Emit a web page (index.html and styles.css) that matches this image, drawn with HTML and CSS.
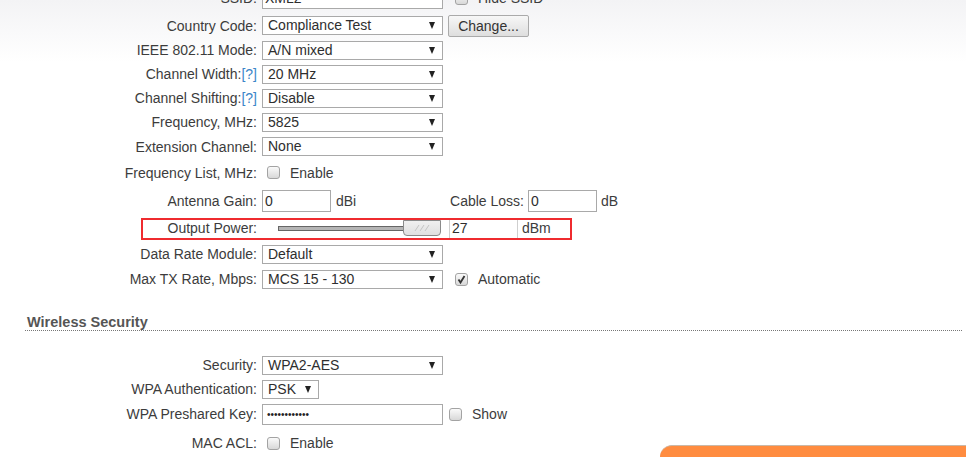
FILE: index.html
```html
<!DOCTYPE html>
<html lang="en">
<head>
    <meta charset="UTF-8">
    <meta name="viewport" content="width=device-width, initial-scale=1.0">
    <link rel="stylesheet" href="styles.css">
    <title>Wireless</title>
</head>
<body>
    <div class="page">
        <div class="form">
            <div class="row h30">
                <div class="lbl">SSID:</div>
                <div class="text wide">XML2</div>
                <span class="chk gap-l"></span><span class="chk-text">Hide SSID</span>
            </div>
            <div class="row h25">
                <div class="lbl">Country Code:</div>
                <div class="sel">Compliance Test</div>
                <div class="btn">Change...</div>
            </div>
            <div class="row">
                <div class="lbl">IEEE 802.11 Mode:</div>
                <div class="sel">A/N mixed</div>
            </div>
            <div class="row">
                <div class="lbl">Channel Width:<span class="help">[?]</span></div>
                <div class="sel">20 MHz</div>
            </div>
            <div class="row">
                <div class="lbl">Channel Shifting:<span class="help">[?]</span></div>
                <div class="sel">Disable</div>
            </div>
            <div class="row">
                <div class="lbl">Frequency, MHz:</div>
                <div class="sel">5825</div>
            </div>
            <div class="row h25">
                <div class="lbl">Extension Channel:</div>
                <div class="sel">None</div>
            </div>
            <div class="row h27">
                <div class="lbl">Frequency List, MHz:</div>
                <span class="chk"></span><span class="chk-text">Enable</span>
            </div>
            <div class="row h29">
                <div class="lbl">Antenna Gain:</div>
                <div class="text num">0</div>
                <span class="unit">dBi</span>
                <div class="lbl2">Cable Loss:</div>
                <div class="text num">0</div>
                <span class="unit-end">dB</span>
            </div>
            <div class="row h26 marked">
                <div class="lbl">Output Power:</div>
                <div class="slider">
                    <div class="track"></div>
                    <div class="handle">
                        <svg width="16" height="8" viewBox="0 0 16 8">
                            <path d="M1 7 L5 1 M6 7 L10 1 M11 7 L15 1" stroke="#c4c4c4" stroke-width="1" fill="none"/>
                        </svg>
                    </div>
                </div>
                <div class="power">27</div>
                <span class="unit-end">dBm</span>
                <div class="mark"></div>
            </div>
            <div class="row h26">
                <div class="lbl">Data Rate Module:</div>
                <div class="sel">Default</div>
            </div>
            <div class="row">
                <div class="lbl">Max TX Rate, Mbps:</div>
                <div class="sel">MCS 15 - 130</div>
                <span class="chk checked gap-l">
                    <svg width="11" height="11" viewBox="0 0 11 11">
                        <path d="M2.5 5.5 L4.5 8.5 L8.5 2" stroke="#333" stroke-width="1.8" fill="none"/>
                    </svg>
                </span>
                <span class="chk-text">Automatic</span>
            </div>
        </div>

        <div class="section-title">Wireless Security</div>

        <div class="form security">
            <div class="row">
                <div class="lbl">Security:</div>
                <div class="sel">WPA2-AES</div>
            </div>
            <div class="row">
                <div class="lbl">WPA Authentication:</div>
                <div class="sel small">PSK</div>
            </div>
            <div class="row h26">
                <div class="lbl">WPA Preshared Key:</div>
                <div class="text wide pass">&bull;&bull;&bull;&bull;&bull;&bull;&bull;&bull;&bull;&bull;&bull;&bull;</div>
                <span class="chk gap-s"></span><span class="chk-text">Show</span>
            </div>
            <div class="row h32">
                <div class="lbl">MAC ACL:</div>
                <span class="chk"></span><span class="chk-text">Enable</span>
            </div>
        </div>
    </div>
    <div class="footer-bar"></div>
</body>
</html>
```

FILE: styles.css
```css
html, body {
    margin: 0;
    height: 100%;
    overflow: hidden;
}
body {
    font-family: "Liberation Sans", Arial, sans-serif;
    font-size: 14px;
    color: #3c3c3c;
    background: linear-gradient(#f3f3f5 0px, #ffffff 62px) no-repeat;
    background-color: #fff;
}
.page {
    margin-top: -17px;
}
/* rows of the settings form */
.row {
    display: flex;
    align-items: center;
    height: 24px;
}
.h25 { height: 25px; }
.h26 { height: 26px; }
.h27 { height: 27px; }
.h29 { height: 29px; }
.h30 { height: 30px; }
.h32 { height: 32px; }
.lbl {
    flex: none;
    width: 257px;
    margin-right: 5px;
    text-align: right;
    white-space: nowrap;
}
.help {
    color: #3b85c8;
}
/* select boxes */
.sel {
    position: relative;
    box-sizing: border-box;
    width: 181px;
    height: 19px;
    line-height: 17px;
    padding-left: 5px;
    border: 1px solid #a9a9a9;
    background: #fff;
    color: #2e2e2e;
}
.sel::after {
    content: "";
    position: absolute;
    right: 7px;
    top: 5px;
    border-left: 3.5px solid transparent;
    border-right: 3.5px solid transparent;
    border-top: 7px solid #222;
}
.sel.small {
    width: 57px;
}
.btn {
    box-sizing: border-box;
    width: 81px;
    height: 22px;
    line-height: 20px;
    margin-left: 5px;
    text-align: center;
    border: 1px solid #aaa;
    border-radius: 2px;
    background: linear-gradient(#f7f7f7, #dedede);
    color: #333;
}
/* text inputs */
.text {
    box-sizing: border-box;
    height: 22px;
    line-height: 20px;
    padding-left: 2px;
    border: 1px solid #a9a9a9;
    background: #fff;
    color: #2e2e2e;
}
.wide {
    width: 181px;
}
.num {
    width: 69px;
}
.pass {
    font-size: 10px;
    padding-left: 4px;
    color: #222;
    height: 21px;
}
.unit {
    width: 114px;
    margin-left: 5px;
}
.unit-end {
    margin-left: 4px;
}
.lbl2 {
    width: 74px;
    margin-right: 4px;
    text-align: right;
    white-space: nowrap;
}
/* checkboxes */
.chk {
    box-sizing: border-box;
    display: inline-block;
    width: 13px;
    height: 13px;
    margin-left: 5px;
    border: 1px solid #a3a3a3;
    border-radius: 3px;
    background: linear-gradient(#fafafa, #d8d8d8);
}
.chk svg {
    display: block;
}
.gap-l {
    margin-left: 12px;
}
.gap-s {
    margin-left: 6px;
}
.chk-text {
    margin-left: 10px;
}
/* output power slider */
.marked {
    position: relative;
}
.slider {
    position: relative;
    width: 180px;
    height: 16px;
}
.track {
    position: absolute;
    left: 16px;
    top: 6px;
    box-sizing: border-box;
    width: 128px;
    height: 5px;
    border: 1px solid #666;
    background: #b4b4b4;
}
.handle {
    position: absolute;
    left: 141px;
    top: 0;
    box-sizing: border-box;
    width: 38px;
    height: 16px;
    border: 1px solid #8a8a8a;
    border-radius: 0 0 4px 4px;
    background: linear-gradient(#f0f0f0, #e0e0e0);
    display: flex;
    align-items: center;
    justify-content: center;
}
.power {
    box-sizing: border-box;
    width: 69px;
    height: 21px;
    line-height: 21px;
    margin-left: 7px;
    padding-left: 2px;
    border-left: 1px solid #cfcfcf;
    border-right: 1px solid #cfcfcf;
    color: #2e2e2e;
}
.mark {
    position: absolute;
    left: 141px;
    top: 3px;
    box-sizing: border-box;
    width: 431px;
    height: 22px;
    border: 2px solid #ef2b2f;
}
/* section heading */
.section-title {
    margin: 23px 0 0 25px;
    width: 935px;
    height: 16px;
    line-height: 16px;
    padding-left: 2px;
    font-size: 14.5px;
    font-weight: bold;
    color: #555;
    border-bottom: 1px dotted #777;
}
.security {
    margin-top: 22px;
}
.footer-bar {
    position: fixed;
    right: 0;
    bottom: 0;
    width: 306px;
    height: 11px;
    background: #ff8c40;
    border-top: 1px solid #c9b8a8;
    border-top-left-radius: 12px;
}
```
